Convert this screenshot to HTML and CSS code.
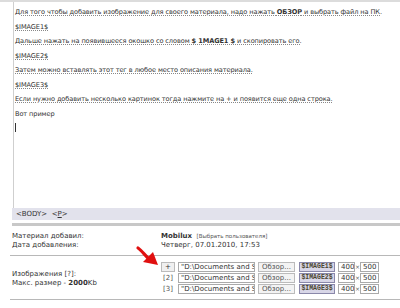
FILE: index.html
```html
<!DOCTYPE html>
<html lang="ru">
<head>
<meta charset="UTF-8">
<title>Добавление изображения</title>
<link rel="stylesheet" href="styles.css">
</head>
<body>
<div class="topbar"></div>
<div class="editor">
    <p class="u">Для того чтобы добавить изображение для своего материала, надо нажать <b>ОБЗОР</b> и выбрать файл на ПК.</p>
    <p class="u">$IMAGE1$</p>
    <p class="u">Дальше нажать на появившееся окошко со словом <b>$ 1MAGE1 $</b> и скопировать его.</p>
    <p class="u">$IMAGE2$</p>
    <p class="u">Затем можно вставлять этот тег в любое место описания материала.</p>
    <p class="u">$IMAGE3$</p>
    <p class="u">Если нужно добавить несколько картинок тогда нажмите на + и появится еще одна строка.</p>
    <p>Вот пример</p>
    <p class="caret"></p>
</div>
<div class="status">&lt;BODY&gt; &nbsp;&lt;<u>P</u>&gt;</div>
<div class="form">
    <div class="row">
        <div class="label">Материал добавил:</div>
        <div class="value"><b>Mobilux</b> &nbsp;<span class="small">[Выбрать пользователя]</span></div>
    </div>
    <div class="row">
        <div class="label">Дата добавления:</div>
        <div class="value">Четверг, 07.01.2010, 17:53</div>
    </div>
    <div class="row images">
        <div class="label">Изображения [?]:<br>Макс. размер - <b>2000</b>Kb</div>
        <div class="value">
            <div class="img-row">
                <span class="plus">+</span>
                <span class="file">"D:\Documents and S</span>
                <span class="btn">Обзор...</span>
                <span class="tag">$IMAGE1$</span>
                <span class="num">400</span><span class="x">×</span><span class="num">500</span>
            </div>
            <div class="img-row">
                <span class="idx">[2]</span>
                <span class="file">"D:\Documents and S</span>
                <span class="btn">Обзор...</span>
                <span class="tag">$IMAGE2$</span>
                <span class="num">400</span><span class="x">×</span><span class="num">500</span>
            </div>
            <div class="img-row">
                <span class="idx">[3]</span>
                <span class="file">"D:\Documents and S</span>
                <span class="btn">Обзор...</span>
                <span class="tag">$IMAGE3$</span>
                <span class="num">400</span><span class="x">×</span><span class="num">500</span>
            </div>
        </div>
        <!-- стрелка на кнопку + -->
        <svg class="arrow" width="26" height="24" viewBox="0 0 26 24">
            <path d="M3 3 C 6 5, 9 9, 13 13" stroke="#e01010" stroke-width="3.2" fill="none" stroke-linecap="round"/>
            <path d="M8 17 L23 20 L18 7 Z" fill="#e01010"/>
        </svg>
    </div>
</div>
</body>
</html>
```

FILE: styles.css
```css
*{
    margin: 0;
    padding: 0;
}
body{
    width: 400px;
    height: 308px;
    overflow: hidden;
    background: #fff;
    font-family: "DejaVu Sans", Verdana, sans-serif;
    font-size: 7px;
    color: #333;
}
.topbar{
    height: 2px;
    background: #dcdcdc;
}
.editor{
    margin-left: 13px;
    border-left: 1px solid #cfcfcf;
    height: 203px;
    padding: 3px 0 0 1px;
}
.editor p{
    font-size: 6.6px;
    letter-spacing: -0.1px;
    line-height: 14.5px;
    white-space: nowrap;
}
.editor .u{
    text-decoration: underline dotted #888;
}
.caret{
    width: 1px;
    height: 9px;
    background: #333;
    margin-top: 2px;
}
.status{
    margin-left: 12px;
    height: 12px;
    line-height: 12px;
    padding-left: 4px;
    background: #e2e2ec;
    border-bottom: 3px solid #fff;
    box-shadow: 0 3px 0 #c8c8c8;
}
.form{
    margin: 8px 0 0 10px;
}
.row{
    display: flex;
    line-height: 10px;
}
.label{
    width: 149px;
    padding-left: 2px;
}
.value{
    flex: 1;
}
.small{
    font-size: 5.5px;
    color: #555;
}
.row + .row{
    margin-top: -1px;
}
.row.images{
    position: relative;
    border-top: 1px solid #b8b8b8;
    border-bottom: 1px solid #b8b8b8;
    margin-top: 5px;
    padding: 5px 0 5px;
}
.images .label{
    align-self: center;
    line-height: 9px;
    padding-top: 2px;
}
.img-row{
    display: flex;
    align-items: center;
    height: 11px;
}
.plus, .file, .btn, .tag, .num{
    border: 1px solid #aaa;
    height: 10px;
    line-height: 8px;
    box-sizing: border-box;
    background: #fff;
    white-space: nowrap;
    overflow: hidden;
}
.plus{
    width: 14px;
    text-align: center;
    background: #f0f0f0;
    border-color: #bbb;
}
.idx{
    width: 14px;
    text-align: center;
    color: #555;
}
.file{
    width: 77px;
    margin-left: 3px;
    padding-left: 2px;
}
.btn{
    width: 37px;
    margin-left: 3px;
    text-align: center;
    background: #f3f3f3;
    color: #555;
    border-color: #bbb;
}
.tag{
    width: 36px;
    margin-left: 4px;
    text-align: center;
    background: #d8d6e7;
    border-color: #8a88aa;
    font-family: "Liberation Mono", monospace;
    font-weight: bold;
    font-size: 6.5px;
    color: #4a4630;
}
.num{
    width: 17px;
    margin-left: 3px;
    padding-left: 2px;
}
.x{
    width: 5px;
    text-align: center;
    color: #666;
    font-size: 6px;
    margin-right: -3px;
}
.num + .x + .num{
    width: 19px;
}
.arrow{
    position: absolute;
    left: 125px;
    top: -11px;
}
```
